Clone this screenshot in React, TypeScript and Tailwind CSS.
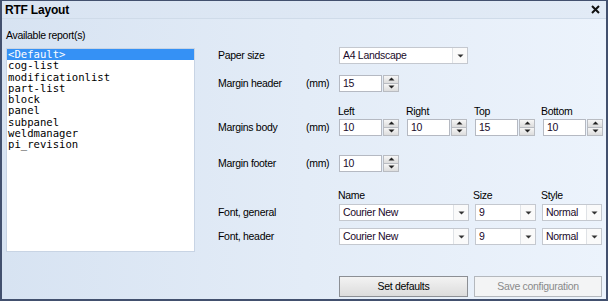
import { ReactNode } from "react";

const ui = { fontFamily: '"Liberation Sans", Arial, sans-serif' };
const mono = { fontFamily: '"DejaVu Sans Mono", "Liberation Mono", monospace' };

const reports = [
  "<Default>",
  "cog-list",
  "modificationlist",
  "part-list",
  "block",
  "panel",
  "subpanel",
  "weldmanager",
  "pi_revision",
];

function Arrow({ up }: { up?: boolean }) {
  return (
    <svg width="7" height="4" viewBox="0 0 7 4">
      <path d={up ? "M0.5 3.5 L3.5 0.5 L6.5 3.5 Z" : "M0.5 0.5 L3.5 3.5 L6.5 0.5 Z"} fill="#222" />
    </svg>
  );
}

function Spinner({ value }: { value: string }) {
  return (
    <div className="flex h-[17px] items-stretch gap-px">
      <div className="flex w-[43px] items-center border border-[#b5b9c2] bg-white pl-[3px] text-[10.5px] text-[#1a0a2a]">
        {value}
      </div>
      <div className="flex w-[16px] flex-col">
        <div className="flex h-1/2 items-center justify-center border border-[#b9bcc2] bg-gradient-to-b from-[#f6f6f6] to-[#dddddd]">
          <Arrow up />
        </div>
        <div className="flex h-1/2 items-center justify-center border border-t-0 border-[#b9bcc2] bg-gradient-to-b from-[#f6f6f6] to-[#dddddd]">
          <Arrow />
        </div>
      </div>
    </div>
  );
}

function Combo({ value, width }: { value: string; width: string }) {
  return (
    <div className={`flex h-[17px] items-stretch border border-[#c4c8cf] bg-white text-[10.5px] text-[#1a0a2a] ${width}`}>
      <div className="flex flex-1 items-center pl-[3px]">{value}</div>
      <div className="flex w-[15px] items-center justify-center border-l border-[#dfe2e6] bg-[#fafafa]">
        <svg width="7" height="4" viewBox="0 0 7 4">
          <path d="M0.5 0.5 L3.5 3.5 L6.5 0.5 Z" fill="#333" />
        </svg>
      </div>
    </div>
  );
}

function Row({ label, unit, children }: { label: string; unit?: string; children: ReactNode }) {
  return (
    <div className="flex items-center">
      <div className="w-[88px] text-black">{label}</div>
      <div className="w-[33px] text-black">{unit}</div>
      {children}
    </div>
  );
}

export default function App() {
  return (
    <div
      className="flex h-[301px] w-[608px] flex-col border-2 border-t border-[#42506e] bg-[#e4ecf6] text-[10.5px] tracking-[-0.3px]"
      style={ui}
    >
      {/* Title bar */}
      <div className="flex h-[18px] items-center justify-between border-b border-[#cfdbe9] bg-gradient-to-r from-[#d9e4f2] to-[#e2ebf6] pl-[3px] pr-[6px]">
        <span className="text-[12px] font-bold tracking-[-0.2px] text-black">RTF Layout</span>
        <svg width="9" height="9" viewBox="0 0 9 9">
          <path d="M1 1 L8 8 M8 1 L1 8" stroke="#111" strokeWidth="2" />
        </svg>
      </div>

      {/* Body */}
      <div className="flex flex-1 bg-gradient-to-r from-[#d7e3f2] via-[#e3ecf7] to-[#ecf3fc]">
        {/* Left: report list */}
        <div className="flex w-[216px] flex-col pl-[4px] pt-[9px]">
          <div className="h-[20px] text-black">Available report(s)</div>
          <div className="h-[204px] w-[189px] border border-[#c8d4e4] bg-white tracking-normal" style={mono}>
            {reports.map((r, i) => (
              <div
                key={r}
                className={`h-[11.3px] pl-px text-[10.6px] leading-[11.3px] ${
                  i === 0 ? "bg-[#3591f5] text-white" : "text-black"
                }`}
              >
                {r}
              </div>
            ))}
          </div>
        </div>

        {/* Right: settings */}
        <div className="flex flex-1 flex-col pb-[2px] pt-[28px]">
          <Row label="Paper size">
            <Combo value="A4 Landscape" width="w-[129px]" />
          </Row>

          <div className="mt-[11px]">
            <Row label="Margin header" unit="(mm)">
              <Spinner value="15" />
            </Row>
          </div>

          <div className="mt-[14px] flex h-[12px] items-center pl-[120px] text-black">
            <div className="w-[68px]">Left</div>
            <div className="w-[68px]">Right</div>
            <div className="w-[67px]">Top</div>
            <div>Bottom</div>
          </div>
          <div className="mt-px">
            <Row label="Margins body" unit="(mm)">
              <div className="flex gap-[8px]">
                <Spinner value="10" />
                <Spinner value="10" />
                <Spinner value="15" />
                <Spinner value="10" />
              </div>
            </Row>
          </div>

          <div className="mt-[19px]">
            <Row label="Margin footer" unit="(mm)">
              <Spinner value="10" />
            </Row>
          </div>

          <div className="mt-[18px] flex h-[12px] items-center pl-[120px] text-black">
            <div className="w-[135px]">Name</div>
            <div className="w-[68px]">Size</div>
            <div>Style</div>
          </div>
          <div className="mt-[2px]">
            <Row label="Font, general">
              <div className="flex gap-[6px]">
                <Combo value="Courier New" width="w-[130px]" />
                <Combo value="9" width="w-[61px]" />
                <Combo value="Normal" width="w-[60px]" />
              </div>
            </Row>
          </div>
          <div className="mt-[7px]">
            <Row label="Font, header">
              <div className="flex gap-[6px]">
                <Combo value="Courier New" width="w-[130px]" />
                <Combo value="9" width="w-[61px]" />
                <Combo value="Normal" width="w-[60px]" />
              </div>
            </Row>
          </div>

          <div className="mt-auto flex gap-[6px] pl-[121px]">
            <button className="h-[21px] w-[129px] border border-[#8c8f94] bg-gradient-to-b from-[#f3f3f3] to-[#dcdcdc] text-black">
              Set defaults
            </button>
            <button
              disabled
              className="h-[21px] w-[128px] border border-[#b4b8bd] bg-[#f3f4f5] text-[#8a8a8a]"
            >
              Save configuration
            </button>
          </div>
        </div>
      </div>
    </div>
  );
}
